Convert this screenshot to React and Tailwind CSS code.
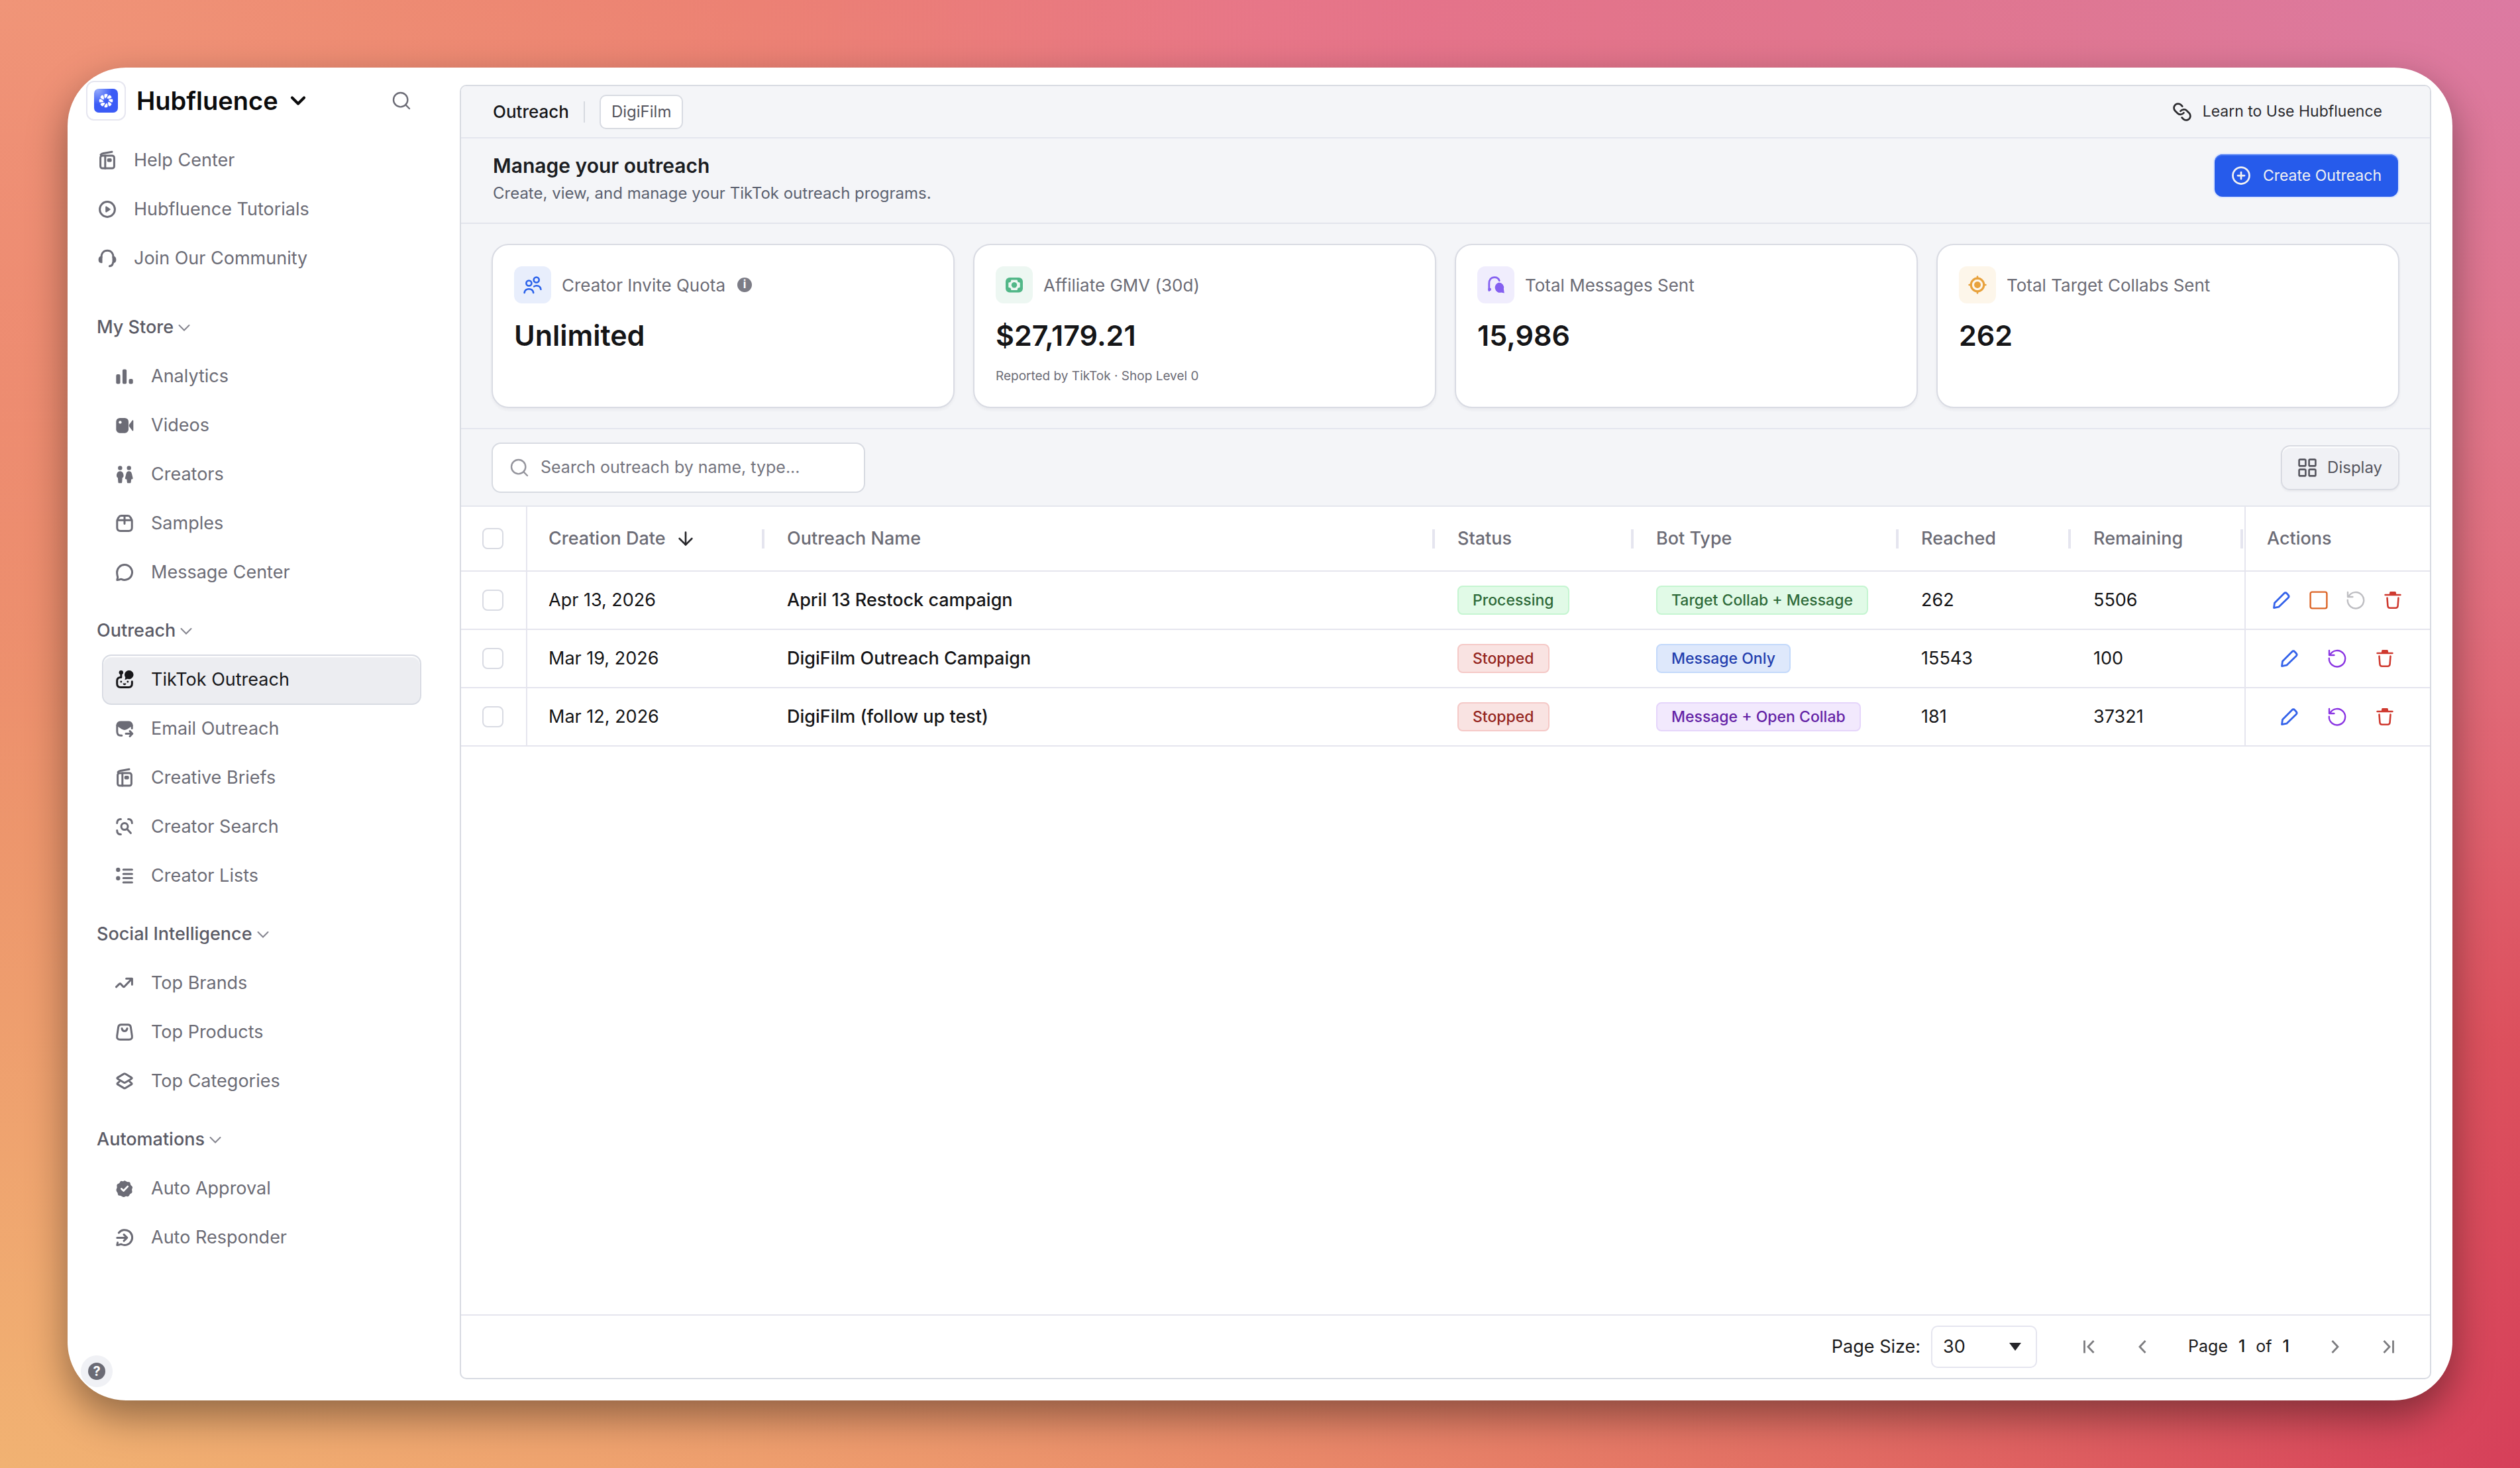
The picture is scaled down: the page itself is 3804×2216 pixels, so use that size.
import clsx from 'clsx';
import { ArrowDown, ChevronDown, CirclePlus, Link, Search } from 'lucide-react';

function Icon({ children, className, width = 3 }) {
	return (
		<svg
			viewBox="0 0 28 28"
			fill="none"
			stroke="currentColor"
			strokeWidth={width}
			strokeLinecap="round"
			strokeLinejoin="round"
			aria-hidden="true"
			className={clsx('size-7 shrink-0 overflow-visible', className)}>
			{children}
		</svg>
	);
}

const BookIcon = () => (
	<Icon>
		<rect x="3.6" y="7" width="20.8" height="19" rx="3" />
		<path d="M10.8 7v19M4 5.6C5 4.2 6 3.8 8 3.4l13-2.2" />
		<rect x="15.2" y="12.4" width="4" height="2.6" rx="0.5" />
	</Icon>
);

const PlayIcon = () => (
	<Icon>
		<circle cx="14" cy="14" r="11.4" />
		<path d="M12.2 10.4v7.2l5.6-3.6z" fill="currentColor" strokeWidth="2" />
	</Icon>
);

const HeadsetIcon = () => (
	<Icon>
		<path d="M5 12.5C5 6 8.6 2.2 14 2.2S23 6 23 12.5" />
		<path
			d="M5.5 11.8v8.4C2.5 20.2 1.6 18.6 1.6 16s1.2-4.2 3.9-4.2zM22.5 11.8v8.4c3 0 3.9-1.6 3.9-4.2s-1.2-4.2-3.9-4.2z"
			fill="currentColor"
			strokeWidth="2"
		/>
		<path d="M22.6 20.5c-.4 3.5-2.4 5-5.2 5.3" />
	</Icon>
);

const BarsIcon = () => (
	<Icon>
		<g fill="currentColor" stroke="none">
			<rect x="1.3" y="11" width="6.2" height="14.5" rx="2" />
			<rect x="10.9" y="3.4" width="6.2" height="22.1" rx="2" />
			<rect x="20.5" y="18" width="6.2" height="7.5" rx="2" />
		</g>
	</Icon>
);

const VideoIcon = () => (
	<Icon>
		<g fill="currentColor" stroke="none">
			<rect x="1.3" y="3" width="18.7" height="22.7" rx="5.5" />
			<path d="M20.8 13.2 25.6 6.8c.6-.8 1.7-.5 1.7.5v14.2c0 1-1.1 1.3-1.7.5l-4.8-6.4z" />
		</g>
		<circle cx="7.4" cy="9.4" r="2.2" fill="#fff" stroke="none" />
	</Icon>
);

const PeopleIcon = () => (
	<Icon>
		<g fill="currentColor" stroke="none">
			<circle cx="7.3" cy="4.4" r="3.2" />
			<circle cx="20.7" cy="4.4" r="3.2" />
			<path d="M7.3 9.2c3.3 0 5.3 3.2 5.3 6.7 0 2-.9 2.8-1.9 3.3l-.5 6.8c-.1.9-.6 1.3-1.4 1.3h-3c-.8 0-1.3-.4-1.4-1.3l-.5-6.8C2.9 18.7 2 17.9 2 15.9c0-3.5 2-6.7 5.3-6.7z" />
			<path d="M20.7 9.2c2.4 0 3.7 1.6 4.3 4l1.5 6.2c.3 1.3-.4 2-1.7 2h-.7l-.5 4.6c-.1.9-.6 1.3-1.4 1.3h-3c-.8 0-1.3-.4-1.4-1.3l-.5-4.6h-.7c-1.3 0-2-.7-1.7-2l1.5-6.2c.6-2.4 1.9-4 4.3-4z" />
		</g>
	</Icon>
);

const PackageIcon = () => (
	<Icon>
		<path d="M2.8 10.5v10c0 3.4 1.6 5 5 5h12.4c3.4 0 5-1.6 5-5v-10c0-1.4-.4-2.3-1.1-3.6L22.6 4.6C21.7 3 20.8 2.5 19 2.5H9c-1.8 0-2.7.5-3.6 2.1L3.9 6.9C3.2 8.2 2.8 9.1 2.8 10.5zM3.2 9.3h21.6M14 3v11.5" />
	</Icon>
);

const ChatIcon = () => (
	<Icon>
		<path d="M14 2.6a11.4 11.4 0 1 1-4.6 21.8c-1.2-.5-2 .2-3.4.6l-3.2.5c.2-1.7 1-2.6.9-4-.1-1.2-1.1-3.5-1.1-7.5A11.4 11.4 0 0 1 14 2.6z" />
	</Icon>
);

const RobotIcon = () => (
	<Icon>
		<path d="M8 10.5c-3.5 0-5.3 1.7-5.3 5.2v4.6c0 3.5 1.7 5.2 5.2 5.2h12.2c3.5 0 5.2-1.7 5.2-5.2v-3.5M8.8 5v5.5" />
		<g fill="currentColor" stroke="none">
			<circle cx="8.8" cy="3.2" r="3.2" />
			<path d="M20.8 0a6.6 6.6 0 1 1-2.2 12.8l-4.2 1.4.9-3.8A6.6 6.6 0 0 1 20.8 0z" />
			<circle cx="8.8" cy="17" r="1.5" />
			<circle cx="18.8" cy="17" r="1.5" />
			<path d="M11.6 19.6h4.8c0 1.6-.9 2.6-2.4 2.6s-2.4-1-2.4-2.6z" />
		</g>
	</Icon>
);

const MailSendIcon = () => (
	<Icon>
		<path d="M2.8 9v9c0 4.5 1.5 6.3 5.4 6.3h1.6M25.2 9v4.5" />
		<path
			d="M2.6 8.5C3.2 4.7 5 3.6 8.5 3.6h11c3.5 0 5.3 1.1 5.9 4.9l-7.6 5c-2.9 1.8-4.7 1.8-7.6 0z"
			fill="currentColor"
			strokeWidth="2.4"
		/>
		<path d="M16 21.5h9.2M22 17.6l3.8 3.9-3.8 4" />
	</Icon>
);

const ScanIcon = () => (
	<Icon>
		<path d="M2.7 8.6C2.7 4.6 4.3 2.5 8.4 2.5M19.6 2.5c4.1 0 5.7 2.1 5.7 6.1M2.7 19.4c0 4 1.6 6.1 5.7 6.1" />
		<circle cx="14" cy="13.6" r="5" />
		<path d="m17.8 17.6 5.6 6" />
	</Icon>
);

const ListIcon = () => (
	<Icon>
		<g fill="currentColor" stroke="none">
			<circle cx="4.3" cy="5" r="3.2" />
			<circle cx="4.3" cy="17.8" r="3.2" />
		</g>
		<path d="M12.2 4.8h13.2M12.2 11.2h13.2M12.2 17.6h13.2M12.2 24h13.2" />
	</Icon>
);

const TrendIcon = () => (
	<Icon>
		<path d="M1.4 19.8 6 15.4c.9-.8 1.6-.8 2.4 0l3.2 3.6c.8.9 1.6.9 2.4 0L25 7.6M16.6 7.2h8.8v9" />
	</Icon>
);

const BagIcon = () => (
	<Icon>
		<path d="M9 2.8h10c2.7 0 4 1.1 4.4 3.7l1.9 13.3c.5 3.7-1 5.4-4.5 5.4H7.2c-3.5 0-5-1.7-4.5-5.4L4.6 6.5C5 3.9 6.3 2.8 9 2.8z" />
		<path d="M10 8.4c.4 2.6 1.9 4 4 4s3.6-1.4 4-4" />
	</Icon>
);

const LayersIcon = () => (
	<Icon>
		<path d="M3.6 8.6 12.8 3.1c.8-.5 1.6-.5 2.4 0l9.2 5.5c1 .6 1 1.3 0 1.9l-9.2 5.5c-.8.5-1.6.5-2.4 0L3.6 10.5c-1-.6-1-1.3 0-1.9z" />
		<path d="M6.3 14.6 3.6 17c-.9.6-.9 1.3 0 1.9l9.2 5.5c.8.5 1.6.5 2.4 0l9.2-5.5c.9-.6.9-1.3 0-1.9l-2.7-2.4" />
	</Icon>
);

const VerifiedIcon = () => (
	<Icon>
		<path
			d="M14 2.2c1.7 0 2.4 1.3 3.8 1.7s2.9-.2 4.1.9.7 2.7 1.4 4 2.4 1.7 2.7 3.3-.9 2.5-.9 4 .9 2.7.2 4.2-2.2 1.3-3.2 2.5-1 2.6-2.5 3.2-2.5-.5-4 0-2 1.3-3.6 1-1.9-1.3-3.3-1.7-2.9.1-4-1-.6-2.6-1.3-3.8S1.6 18 1.5 16.4s1-2.4 1.1-3.9-.7-2.9.1-4.2 2.3-1.2 3.4-2.2.9-2.5 2.3-3.1 2.3.6 3.5.2 1.4-1 2.1-1z"
			fill="currentColor"
			stroke="none"
		/>
		<path d="m9.3 14.4 3.2 3.1 6.2-6.4" stroke="#fff" strokeWidth="2.8" />
	</Icon>
);

const ReplyIcon = () => (
	<Icon>
		<path d="M5.3 7A11.4 11.4 0 1 1 9.6 24.5c-1.3-.5-2.1 0-3.5.4l-3.3.6c.1-1.7.9-2.7.7-3.8" />
		<path d="M2.8 14.4h14.7M13 9.6l4.8 4.8-4.8 4.7" />
	</Icon>
);

const UsersIcon = () => (
	<Icon width={2.6}>
		<circle cx="8.4" cy="11.5" r="4" />
		<circle cx="19.7" cy="6.5" r="4" />
		<path d="M1.6 26c.5-4 3-5.8 6.8-5.8s6.3 1.8 6.8 5.8M16.2 16.4c1-.9 2.2-1.2 3.7-1.2 3.8 0 6 1.9 6.5 5.6" />
	</Icon>
);

const CashIcon = () => (
	<Icon>
		<rect x="1" y="3" width="26" height="22.4" rx="6" fill="currentColor" stroke="none" />
		<path d="M9.5 6.5h9l1 3.2 3.2 1v7l-3.2 1-1 3.2h-9l-1-3.2-3.2-1v-7l3.2-1z" fill="#edf7f2" stroke="none" />
		<circle cx="14" cy="14.2" r="4.2" fill="currentColor" stroke="none" />
	</Icon>
);

const SupportIcon = () => (
	<Icon width={2.8}>
		<path d="M3.8 22.5V12C3.8 6.4 6.8 2.6 12 2.6c3.6 0 6.2 1.7 7.3 5" />
		<circle cx="4.6" cy="20.8" r="2.4" fill="currentColor" stroke="none" />
		<path d="M18.6 10.5a7.6 7.6 0 0 1 7.3 9.6l.9 6.3-4.6-.8A7.6 7.6 0 1 1 18.6 10.5z" fill="currentColor" stroke="none" />
	</Icon>
);

const TargetIcon = () => (
	<Icon width={3.2}>
		<circle cx="14" cy="14" r="9.8" />
		<circle cx="14" cy="14" r="5" fill="currentColor" stroke="none" />
		<path d="M14 1.6v2.8M14 23.6v2.8M1.6 14h2.8M23.6 14h2.8" strokeWidth="2.6" />
	</Icon>
);

const PencilIcon = () => (
	<Icon width={2.8}>
		<path d="M2.5 25.6 3.5 18.3 17.9 3.7c1.3-1.3 2.8-1.3 4 0l2.3 2.5c1.2 1.3 1.2 2.7 0 4L9.7 24.2z" />
	</Icon>
);

const StopIcon = () => (
	<Icon width={2.4}>
		<rect x="1.6" y="1.6" width="24.8" height="24.8" rx="2.6" />
	</Icon>
);

const RestartIcon = () => (
	<Icon width={2.4}>
		<path d="M2 2v7h7.4M3.2 8.5A12.2 12.2 0 1 1 1.8 13.6" />
	</Icon>
);

const TrashIcon = () => (
	<Icon width={2.6}>
		<path d="M2.6 6h22.8M5.5 10.5l.9 12c.2 2.3 1.2 3.3 3.4 3.3h8.4c2.2 0 3.2-1 3.4-3.3l.9-12" />
		<path d="M10 5.5 10.5 2.4h7L18 5.5z" fill="currentColor" />
	</Icon>
);

const GridIcon = () => (
	<Icon width={2.6}>
		<rect x="1.6" y="1.6" width="9.8" height="9.8" rx="1.5" />
		<rect x="16.6" y="1.6" width="9.8" height="9.8" rx="1.5" />
		<rect x="1.6" y="16.6" width="9.8" height="9.8" rx="1.5" />
		<rect x="16.6" y="16.6" width="9.8" height="9.8" rx="1.5" />
	</Icon>
);

const BLADES = [0, 45, 90, 135, 180, 225, 270, 315];

function Logo() {
	return (
		<svg viewBox="0 0 36 36" className="size-9" aria-hidden="true">
			<defs>
				<radialGradient id="logo-glow" cx="0.15" cy="0.05" r="0.6">
					<stop offset="0" stopColor="#93a9fb" />
					<stop offset="1" stopColor="#3b5bf6" />
				</radialGradient>
			</defs>
			<rect width="36" height="36" rx="7" fill="url(#logo-glow)" />
			<g fill="#fff">
				{BLADES.map((angle) => (
					<path
						key={angle}
						d="M15.6 8.4C17 7.4 19.4 7.4 20.6 8.6 20.4 11.2 19 13.2 16.6 14.6 15.6 12.6 15.2 10.6 15.6 8.4z"
						transform={`rotate(${angle} 18 18)`}
					/>
				))}
			</g>
		</svg>
	);
}

const helpLinks = [
	{ label: 'Help Center', icon: BookIcon },
	{ label: 'Hubfluence Tutorials', icon: PlayIcon },
	{ label: 'Join Our Community', icon: HeadsetIcon },
];

const sections = [
	{
		title: 'My Store',
		items: [
			{ label: 'Analytics', icon: BarsIcon },
			{ label: 'Videos', icon: VideoIcon },
			{ label: 'Creators', icon: PeopleIcon },
			{ label: 'Samples', icon: PackageIcon },
			{ label: 'Message Center', icon: ChatIcon },
		],
	},
	{
		title: 'Outreach',
		items: [
			{ label: 'TikTok Outreach', icon: RobotIcon, active: true },
			{ label: 'Email Outreach', icon: MailSendIcon },
			{ label: 'Creative Briefs', icon: BookIcon },
			{ label: 'Creator Search', icon: ScanIcon },
			{ label: 'Creator Lists', icon: ListIcon },
		],
	},
	{
		title: 'Social Intelligence',
		items: [
			{ label: 'Top Brands', icon: TrendIcon },
			{ label: 'Top Products', icon: BagIcon },
			{ label: 'Top Categories', icon: LayersIcon },
		],
	},
	{
		title: 'Automations',
		items: [
			{ label: 'Auto Approval', icon: VerifiedIcon },
			{ label: 'Auto Responder', icon: ReplyIcon },
		],
	},
];

const stats = [
	{ label: 'Creator Invite Quota', value: 'Unlimited', icon: UsersIcon, tone: 'bg-[#e8eefc] text-[#2b62ea]', info: true },
	{
		label: 'Affiliate GMV (30d)',
		value: '$27,179.21',
		icon: CashIcon,
		tone: 'bg-[#edf7f2] text-[#52b788]',
		note: 'Reported by TikTok · Shop Level 0',
	},
	{ label: 'Total Messages Sent', value: '15,986', icon: SupportIcon, tone: 'bg-[#f0edfd] text-[#8560f0]' },
	{ label: 'Total Target Collabs Sent', value: '262', icon: TargetIcon, tone: 'bg-[#fdf6ea] text-[#e8a23d]' },
];

const badgeTones = {
	green: 'border-[#c5f5d1] bg-[#e1fae7] text-[#2f6b3a]',
	red: 'border-[#f5c9c7] bg-[#f9e3e2] text-[#95261f]',
	blue: 'border-[#c3d9fb] bg-[#dee8fb] text-[#243fae]',
	purple: 'border-[#e5d5fb] bg-[#f2e9fd] text-[#6423a6]',
};

const campaigns = [
	{
		date: 'Apr 13, 2026',
		name: 'April 13 Restock campaign',
		status: ['Processing', 'green'],
		bot: ['Target Collab + Message', 'green'],
		reached: '262',
		remaining: '5506',
		running: true,
	},
	{
		date: 'Mar 19, 2026',
		name: 'DigiFilm Outreach Campaign',
		status: ['Stopped', 'red'],
		bot: ['Message Only', 'blue'],
		reached: '15543',
		remaining: '100',
	},
	{
		date: 'Mar 12, 2026',
		name: 'DigiFilm (follow up test)',
		status: ['Stopped', 'red'],
		bot: ['Message + Open Collab', 'purple'],
		reached: '181',
		remaining: '37321',
	},
];

function NavItem({ item, nested }) {
	const ItemIcon = item.icon;

	return (
		<li className="flex h-[74px] flex-col">
			<a
				href="#"
				aria-current={item.active ? 'page' : undefined}
				className={clsx(
					'-my-px flex h-[76px] shrink-0 items-center gap-[26px] rounded-[14px] border-2 pr-4 text-[27px]',
					nested ? 'ml-[52px] pl-[18px]' : 'ml-7 pl-4',
					item.active
						? 'border-[#d8dbe3] bg-[#ecedf1] text-[#17171a] shadow-[inset_0_2px_2px_#ffffff]'
						: 'border-transparent text-[#6c6c76]',
				)}>
				<ItemIcon />
				<span className="truncate">{item.label}</span>
			</a>
		</li>
	);
}

function Sidebar() {
	return (
		<aside className="relative flex w-[592px] shrink-0 flex-col pt-5 pr-[58px]">
			<div className="flex h-[60px] items-center pl-7">
				<button type="button" className="flex items-center gap-4">
					<span className="flex size-[60px] items-center justify-center rounded-xl border-2 border-[#e6e6f0]">
						<Logo />
					</span>
					<span className="text-[38px] font-semibold text-[#0b0b0c]">Hubfluence</span>
					<ChevronDown className="-ml-1 size-9 text-[#0b0b0c]" strokeWidth={2.8} />
				</button>
				<button type="button" aria-label="Search" className="mr-[14px] ml-auto">
					<Search className="size-8 text-[#6c6c76]" strokeWidth={1.8} />
				</button>
			</div>

			<nav className="mt-[23px]">
				<ul className="pb-4">
					{helpLinks.map((item) => (
						<NavItem key={item.label} item={item} />
					))}
				</ul>
				{sections.map((section) => (
					<div key={section.title} className="pt-[14px]">
						<button type="button" className="ml-11 flex h-[74px] items-center gap-1 text-[27px] font-medium text-[#5b5b66]">
							{section.title}
							<svg
								viewBox="0 0 24 24"
								fill="none"
								stroke="currentColor"
								strokeWidth="2"
								strokeLinecap="round"
								className="size-6 text-[#84848e]"
								aria-hidden="true">
								<path d="m4.5 9 7.5 7.5L19.5 9" />
							</svg>
						</button>
						<ul>
							{section.items.map((item) => (
								<NavItem key={item.label} item={item} nested />
							))}
						</ul>
					</div>
				))}
			</nav>

			<button
				type="button"
				aria-label="Help"
				className="absolute bottom-5 left-5 flex size-12 items-center justify-center rounded-full bg-[#f0f1f5]">
				<span className="flex size-[26px] items-center justify-center rounded-full bg-[#6b6b75] text-[20px] font-bold text-white">?</span>
			</button>
		</aside>
	);
}

function StatCard({ stat }) {
	const StatIcon = stat.icon;

	return (
		<div className="min-h-[248px] rounded-[26px] border-2 border-[#d9dbe3] bg-white p-8 shadow-[0_3px_4px_rgba(30,30,60,0.05)]">
			<div className="flex items-center gap-4">
				<span className={clsx('flex size-14 items-center justify-center rounded-xl', stat.tone)}>
					<StatIcon />
				</span>
				<span className="text-[26px] text-[#6c6c76]">{stat.label}</span>
				{stat.info && (
					<span className="ml-0.5 flex size-[22px] items-center justify-center rounded-full bg-[#7c7c86] text-[17px] font-bold text-white">i</span>
				)}
			</div>
			<p className="mt-5 text-[43px] leading-[56px] font-semibold text-[#151517]">{stat.value}</p>
			{stat.note && <p className="mt-5 text-[19px] leading-7 text-[#6c6c76]">{stat.note}</p>}
		</div>
	);
}

function Badge({ value }) {
	const [label, tone] = value;
	return (
		<span className={clsx('inline-flex h-11 items-center rounded-lg border-2 px-[21px] text-[23px] font-medium whitespace-nowrap', badgeTones[tone])}>
			{label}
		</span>
	);
}

function HeaderCell({ children, last }) {
	return (
		<th className={clsx('p-0 text-left font-medium', last && 'border-l-2 border-[#e5e5ee]')}>
			<div className="flex items-center justify-between pr-0.5 pl-8">
				<span className="flex items-center gap-[14px]">{children}</span>
				{!last && <span className="h-[29px] w-1 bg-[#e5e5ef]" />}
			</div>
		</th>
	);
}

const checkboxClass = 'block size-8 appearance-none rounded-lg border-2 border-[#d9dbe3] bg-white';

function CampaignTable() {
	return (
		<table className="w-full table-fixed border-separate border-spacing-0">
			<colgroup>
				<col className="w-[100px]" />
				<col className="w-[360px]" />
				<col />
				<col className="w-[300px]" />
				<col className="w-[400px]" />
				<col className="w-[260px]" />
				<col className="w-[260px]" />
				<col className="w-[280px]" />
			</colgroup>
			<thead>
				<tr className="h-[98px] text-[27px] text-[#6c6c76] *:border-b-2 *:border-[#e5e5ee]">
					<th className="border-r-2 p-0 pl-8">
						<input type="checkbox" aria-label="Select all campaigns" className={checkboxClass} />
					</th>
					<HeaderCell>
						Creation Date
						<ArrowDown className="size-8 text-[#26262a]" strokeWidth={2} />
					</HeaderCell>
					<HeaderCell>Outreach Name</HeaderCell>
					<HeaderCell>Status</HeaderCell>
					<HeaderCell>Bot Type</HeaderCell>
					<HeaderCell>Reached</HeaderCell>
					<HeaderCell>Remaining</HeaderCell>
					<HeaderCell last>Actions</HeaderCell>
				</tr>
			</thead>
			<tbody>
				{campaigns.map((row) => (
					<tr key={row.name} className="h-[88px] text-[27px] text-[#151517] *:border-b-2 *:border-[#e5e5ee]">
						<td className="border-r-2 p-0 pl-8">
							<input type="checkbox" aria-label={`Select ${row.name}`} className={checkboxClass} />
						</td>
						<td className="p-0 pl-8">{row.date}</td>
						<td className="truncate p-0 pl-8 font-medium">{row.name}</td>
						<td className="p-0 pl-8">
							<div className="flex">
								<Badge value={row.status} />
							</div>
						</td>
						<td className="p-0 pl-8">
							<div className="flex">
								<Badge value={row.bot} />
							</div>
						</td>
						<td className="p-0 pl-8">{row.reached}</td>
						<td className="p-0 pl-8">{row.remaining}</td>
						<td className="border-l-2 p-0 pr-0.5">
							<div className={clsx('flex items-center justify-center', row.running ? 'gap-7' : 'gap-11')}>
								<button type="button" aria-label="Edit" className="text-[#3563ea]">
									<PencilIcon />
								</button>
								{row.running && (
									<button type="button" aria-label="Stop" className="text-[#dc6426]">
										<StopIcon />
									</button>
								)}
								<button type="button" aria-label="Restart" disabled={row.running} className={row.running ? 'text-[#bebec2]' : 'text-[#8a35e2]'}>
									<RestartIcon />
								</button>
								<button type="button" aria-label="Delete" className="text-[#cf3a30]">
									<TrashIcon />
								</button>
							</div>
						</td>
					</tr>
				))}
			</tbody>
		</table>
	);
}

function PageButton({ label, d }) {
	return (
		<button type="button" aria-label={label} className="flex h-12 w-[30px] items-center justify-center text-[#7d7d80]">
			<Icon width={2.8}>
				<path d={d} strokeLinecap="butt" strokeLinejoin="miter" />
			</Icon>
		</button>
	);
}

function Pagination() {
	return (
		<div className="flex h-24 items-center justify-end border-t-2 border-[#e5e5ee] pr-12 text-[#1a1a1c]">
			<label htmlFor="page-size" className="text-[27px]">
				Page Size:
			</label>
			<div className="relative ml-4">
				<select
					id="page-size"
					defaultValue="30"
					className="h-16 w-40 appearance-none rounded-[10px] border-2 border-[#e5e5ef] bg-white pl-4 text-[27px]">
					<option>30</option>
					<option>50</option>
					<option>100</option>
				</select>
				<svg viewBox="0 0 18 12" className="pointer-events-none absolute top-[26px] right-6 h-3 w-[18px]" aria-hidden="true">
					<path d="M0 0h18L9 12z" fill="#26262a" />
				</svg>
			</div>
			<div className="ml-16 flex items-center">
				<div className="flex gap-[50px]">
					<PageButton label="First page" d="M6.5 4.5v19M20.5 5l-8.5 9 8.5 9" />
					<PageButton label="Previous page" d="M18.5 5 10 14l8.5 9" />
				</div>
				<p className="mx-[54px] flex gap-4 text-[25px]">
					<span>Page</span>
					<span className="font-medium">1</span>
					<span>of</span>
					<span className="font-medium">1</span>
				</p>
				<div className="flex gap-[50px]">
					<PageButton label="Next page" d="m9.5 5 8.5 9-8.5 9" />
					<PageButton label="Last page" d="M21.5 4.5v19M7.5 5l8.5 9-8.5 9" />
				</div>
			</div>
		</div>
	);
}

function OutreachPage() {
	return (
		<main className="mt-[26px] mr-8 mb-8 flex min-w-0 flex-1 flex-col overflow-hidden rounded-[10px] border-2 border-[#d8dbe2] bg-white">
			<div className="flex h-[79px] items-center border-b-2 border-[#e4e6ee] bg-[#f4f5f8] px-12">
				<h1 className="text-[26px] font-medium text-[#17171a]">Outreach</h1>
				<span className="ml-[22px] h-8 w-0.5 bg-[#d6d9e0]" />
				<span className="ml-[22px] flex h-[52px] items-center rounded-[10px] border-2 border-[#d8dbe2] bg-white px-4 text-[24px] text-[#55555e]">
					DigiFilm
				</span>
				<a href="#" className="mr-6 ml-auto flex items-center gap-4 text-[23px] text-[#2c2c30]">
					<Link className="size-[30px] -scale-x-100" strokeWidth={2.2} />
					Learn to Use Hubfluence
				</a>
			</div>

			<div className="flex h-[129px] items-start justify-between border-b-2 border-[#e2e4ec] bg-[#f4f5f8] px-12">
				<div className="pt-5">
					<h2 className="text-[30px] leading-[42px] font-semibold text-[#1b1d22]">Manage your outreach</h2>
					<p className="text-[24px] leading-[42px] text-[#5c6270]">Create, view, and manage your TikTok outreach programs.</p>
				</div>
				<button
					type="button"
					className="mt-6 flex h-16 items-center gap-[18px] rounded-xl bg-[#265beb] px-[25px] text-[23px] text-[#f0f0f2] shadow-[0_0_0_2px_#dbe5fd,inset_0_2px_1px_#4877f2]">
					<CirclePlus className="size-[30px]" strokeWidth={2.2} />
					Create Outreach
				</button>
			</div>

			<div className="grid grid-cols-4 gap-7 border-b-2 border-[#e4e6ee] bg-[#f4f5f8] px-[46px] py-[30px]">
				{stats.map((stat) => (
					<StatCard key={stat.label} stat={stat} />
				))}
			</div>

			<div className="flex h-[117px] items-center justify-between border-b-2 border-[#e4e6ee] bg-[#f4f5f8] px-[46px]">
				<label className="flex h-[76px] w-[564px] items-center gap-4 rounded-[14px] border-2 border-[#d8dbe2] bg-white pr-4 pl-6">
					<Search className="size-8 shrink-0 text-[#94949c]" strokeWidth={1.8} />
					<input
						type="text"
						aria-label="Search outreach"
						placeholder="Search outreach by name, type..."
						className="min-w-0 flex-1 text-[25px] text-[#17171a] outline-none placeholder:text-[#74747e]"
					/>
				</label>
				<button
					type="button"
					className="flex h-[68px] items-center gap-4 rounded-[14px] border-2 border-[#d9dbe2] bg-[#f0f1f5] px-6 text-[24px] text-[#55555e] shadow-[0_2px_3px_rgba(30,30,60,0.05),inset_0_2px_2px_#ffffff]">
					<GridIcon />
					Display
				</button>
			</div>

			<div className="flex-1">
				<CampaignTable />
			</div>
			<Pagination />
		</main>
	);
}

export default function App() {
	return (
		<div className="flex min-h-screen bg-[#e76d64] bg-[radial-gradient(at_0%_0%,#f09578_0%,transparent_40%),radial-gradient(at_100%_0%,#dc7aa2_0%,transparent_50%),radial-gradient(at_0%_100%,#f1b272_0%,transparent_75%),radial-gradient(at_100%_100%,#d43858_0%,transparent_50%),radial-gradient(at_50%_0%,#ea6f80_0%,transparent_50%)] p-[102px] font-['Inter',sans-serif]">
			<div className="flex flex-1 rounded-[88px] bg-white shadow-[0_24px_60px_rgba(0,0,0,0.4)]">
				<Sidebar />
				<OutreachPage />
			</div>
		</div>
	);
}
